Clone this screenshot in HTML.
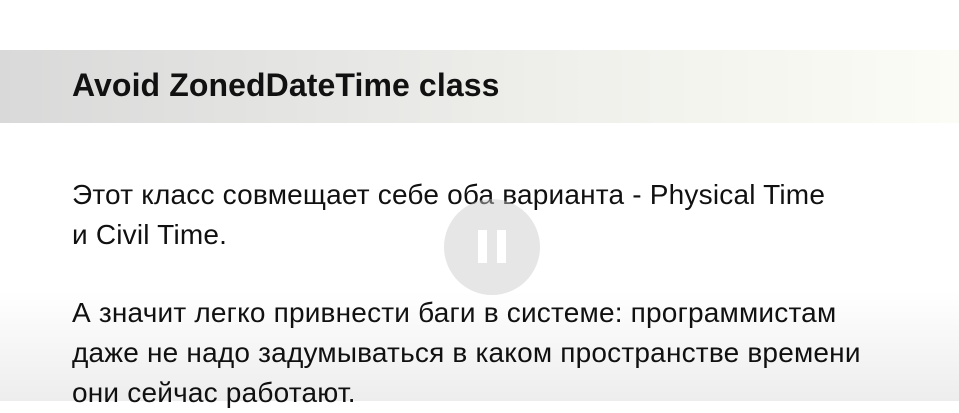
<!DOCTYPE html>
<html><head><meta charset="utf-8"><style>
html,body{margin:0;padding:0;width:959px;height:401px;overflow:hidden;background:#fff;font-family:"Liberation Sans",sans-serif;color:#111;}
.band{position:absolute;left:0;top:50px;width:959px;height:73px;background:linear-gradient(90deg,#d9d9d9 0%,#e8e8e6 40%,#f3f3ee 70%,#fcfcf6 100%);}
.title{position:absolute;left:72px;top:67px;font-size:32px;font-weight:bold;white-space:nowrap;letter-spacing:0.1px;}
.p{position:absolute;left:72px;font-size:28px;line-height:40px;white-space:nowrap;letter-spacing:0.2px;}
.shade{position:absolute;left:0;top:290px;width:959px;height:111px;background:linear-gradient(180deg,rgba(0,0,0,0) 0%,rgba(0,0,0,0.07) 100%);}
.circ{position:absolute;left:444px;top:199px;width:96px;height:96px;border-radius:50%;background:rgba(200,200,200,0.45);}
.bar{position:absolute;top:230px;width:9px;height:33px;background:#fff;}
</style></head><body>
<div class="band"></div>
<div class="title">Avoid ZonedDateTime class</div>
<div class="p" style="top:175px">Этот класс совмещает себе оба варианта - Physical Time<br>и Civil Time.</div>
<div class="p" style="top:293px">А значит легко привнести баги в системе: программистам<br>даже не надо задумываться в каком пространстве времени<br>они сейчас работают.</div>
<div class="shade"></div>
<div class="circ"></div>
<div class="bar" style="left:478px"></div>
<div class="bar" style="left:497px"></div>
</body></html>
